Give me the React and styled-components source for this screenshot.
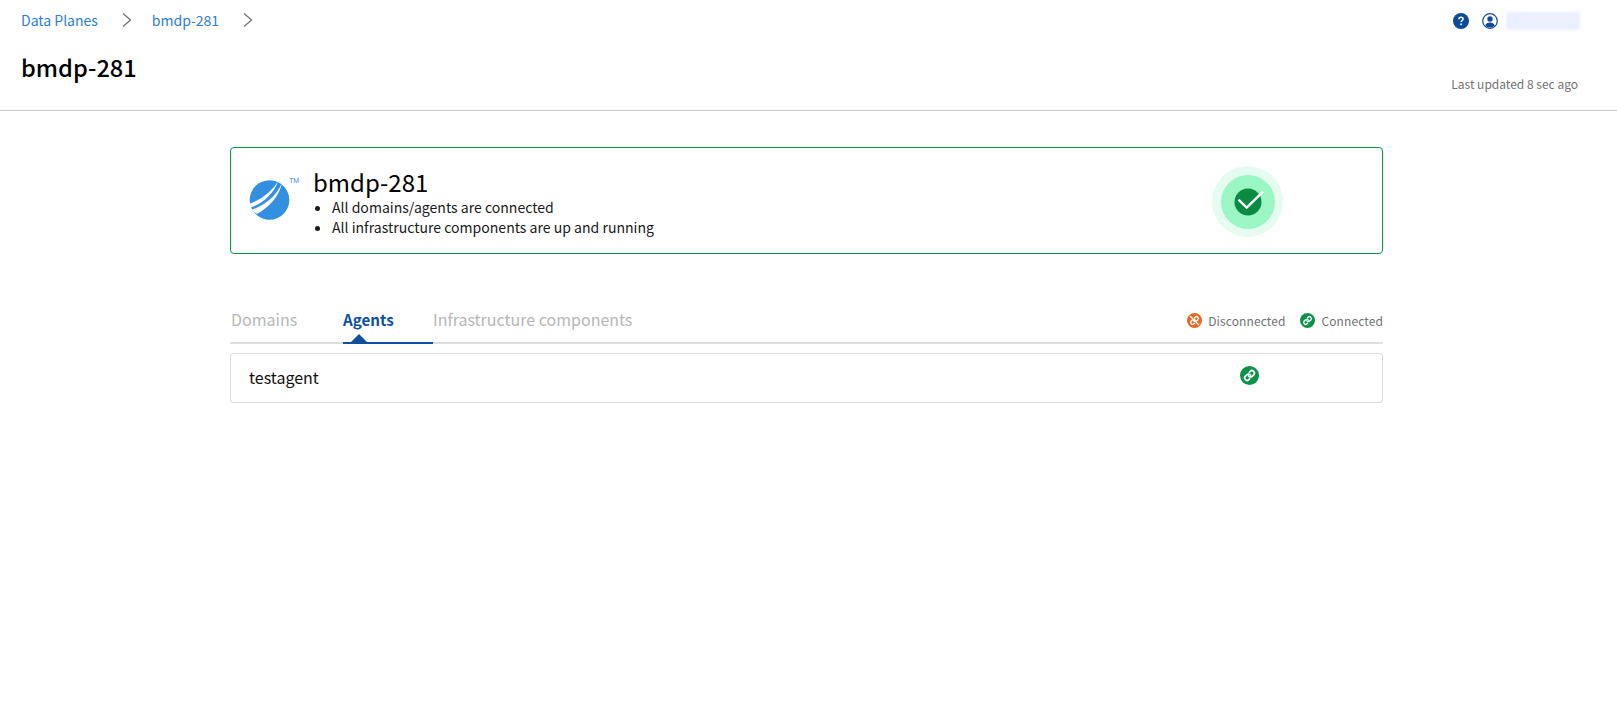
import React from "react";
import styled, { createGlobalStyle } from "styled-components";

const Global = createGlobalStyle`
  html, body { margin: 0; padding: 0; background: #fff; }
  body { font-family: "Noto Sans CJK SC", "Source Sans Pro", "Noto Sans", sans-serif; color: #000; }
`;

const Page = styled.div`
  width: 1617px;
  height: 723px;
  overflow: hidden;
  display: flex;
  flex-direction: column;
`;

const Header = styled.header`
  height: 111px;
  box-sizing: border-box;
  border-bottom: 1px solid #c6c6c6;
  padding: 0 37px 0 21px;
  display: grid;
  grid-template-columns: 1fr auto;
  grid-template-rows: 41px 1fr;
`;

const Breadcrumbs = styled.nav`
  display: flex;
  align-items: center;
  padding-bottom: 2px;
  font-size: 14px;
  color: #2a7fd5;
`;

const Crumb = styled.span`
  line-height: 20px;
`;

const CrumbSep = styled.svg`
  width: 10px;
  height: 16px;
  margin: 0 20px 0 24px;
  fill: none;
  stroke: #727272;
  stroke-width: 1.3;
`;

const UserBar = styled.div`
  display: flex;
  align-items: center;
  justify-content: flex-end;
  gap: 13px;
`;

const BlurName = styled.div`
  width: 74px;
  height: 18px;
  margin-left: -5px;
  background: #ebefff;
  filter: blur(1.5px);
`;

const Title = styled.h1`
  margin: 0;
  font-size: 23.6px;
  line-height: 36px;
  font-weight: 500;
  align-self: start;
  margin-top: 8px;
`;

const Updated = styled.div`
  font-size: 12px;
  line-height: 18px;
  color: #727272;
  align-self: end;
  justify-self: end;
  margin: 0 2px 17px 0;
`;

const Content = styled.main`
  width: 1153px;
  margin-left: 230px;
  padding-top: 36px;
`;

const SummaryCard = styled.section`
  height: 107px;
  box-sizing: border-box;
  border: 1px solid #0a9249;
  border-radius: 4px;
  display: flex;
  align-items: center;
  position: relative;
  padding-left: 17px;
`;

const LogoWrap = styled.div`
  width: 54px;
  height: 50px;
  margin-right: 11px;
  flex: none;
`;

const SummaryText = styled.div`
  display: flex;
  flex-direction: column;
  margin-top: 2px;
`;

const SummaryName = styled.div`
  font-size: 24px;
  line-height: 30px;
  font-weight: 400;
`;

const Bullets = styled.ul`
  margin: 0;
  padding: 0 0 0 19px;
  font-size: 14.05px;
  line-height: 20px;
  color: #1a1a1a;
`;

const StatusHalo = styled.div`
  position: absolute;
  left: 981px;
  top: 18px;
  width: 71px;
  height: 71px;
  border-radius: 50%;
  background: #e6fcf0;
  display: flex;
  align-items: center;
  justify-content: center;
`;

const StatusRing = styled.div`
  width: 54px;
  height: 54px;
  border-radius: 50%;
  background: #9af7c4;
  display: flex;
  align-items: center;
  justify-content: center;
`;

const TabsBar = styled.div`
  margin-top: 52px;
  height: 38px;
  box-sizing: border-box;
  border-bottom: 2px solid #dedede;
  display: flex;
  justify-content: space-between;
`;

const TabList = styled.div`
  display: flex;
`;

const Tab = styled.div`
  position: relative;
  box-sizing: border-box;
  height: 38px;
  width: ${p => p.$width}px;
  padding-top: 1px;
  padding-left: ${p => p.$inset || 0}px;
  font-size: ${p => (p.$active ? 15.2 : 16)}px;
  line-height: 24px;
  white-space: nowrap;
  font-weight: ${p => (p.$active ? 700 : 400)};
  color: ${p => (p.$active ? "#0e4f9e" : "#b6b6b6")};
  border-bottom: 2px solid ${p => (p.$active ? "#0e4f9e" : "transparent")};
  &::after {
    content: "";
    display: ${p => (p.$active ? "block" : "none")};
    position: absolute;
    left: 8px;
    bottom: 0;
    border-left: 8px solid transparent;
    border-right: 8px solid transparent;
    border-bottom: 8px solid #0e4f9e;
  }
`;

const Legend = styled.div`
  display: flex;
  align-items: center;
  height: 29px;
  font-size: 12px;
  letter-spacing: 0.1px;
  color: #727272;
`;

const LegendItem = styled.div`
  display: flex;
  align-items: center;
  gap: 6px;
  margin-left: 15px;
`;

const Row = styled.div`
  margin-top: 9px;
  height: 50px;
  box-sizing: border-box;
  border: 1px solid #dcdcdc;
  border-radius: 3px;
  display: flex;
  align-items: center;
  padding: 0 0 2px 18px;
  position: relative;
  font-size: 16px;
  color: #111;
`;

const RowStatus = styled.div`
  position: absolute;
  left: 1009px;
  top: 12px;
  display: flex;
`;

const Icon = styled.svg`
  display: block;
  flex: none;
`;

const CheckIcon = styled(Icon)`
  margin-left: 2px;
`;

const Chevron = () => (
  <CrumbSep viewBox="0 0 10 16"><path d="M1 1.5 L8.5 8 L1 14.5" /></CrumbSep>
);

const Help = () => (
  <Icon width="16" height="16" viewBox="0 0 16 16">
    <circle cx="8" cy="8" r="8" fill="#0e4a9a" />
    <path d="M5.9 6.2c0-1.2.9-1.9 2.1-1.9s2.1.7 2.1 1.8c0 1.5-2 1.4-2 2.9" fill="none" stroke="#fff" strokeWidth="1.5" />
    <circle cx="8.05" cy="11.3" r="0.95" fill="#fff" />
  </Icon>
);

const User = () => (
  <Icon width="16" height="16" viewBox="0 0 16 16">
    <circle cx="8" cy="8" r="7.3" fill="#fff" stroke="#0e4a9a" strokeWidth="1.2" />
    <circle cx="8" cy="6" r="2.7" fill="#0e4a9a" />
    <path d="M3.2 12.4c.6-2 2.6-3 4.8-3s4.200 1 4.800 3c-1.300 1.300-2.900 2-4.800 2s-3.500-.7-4.800-2z" fill="#0e4a9a" />
  </Icon>
);

const Logo = () => (
  <svg width="54" height="50" viewBox="0 0 54 50">
    <circle cx="21.500" cy="24" r="19.800" fill="#338fdf" />
    <path d="M30 5.500 C 24 15, 13 24, 0 28.500 L 1 32 C 15 28, 26 17, 30 5.500 Z" fill="#fff" />
    <path d="M34 7 C 29 19, 18 29, 3 34 L 9 38 C 20 32, 31 21, 34 7 Z" fill="#fff" />
    <text x="41" y="7" fontSize="7" fill="#338fdf" fontFamily="Liberation Sans, sans-serif">TM</text>
  </svg>
);

const Check = () => (
  <CheckIcon width="38" height="34" viewBox="0 0 38 34">
    <circle cx="18" cy="17" r="13.500" fill="#0a8a42" />
    <path d="M8.500 14.700 L16.700 22.500 L33.300 6.300" fill="none" stroke="#fff" strokeWidth="2.400" />
  </CheckIcon>
);

const LinkIcon = ({ size = 16, bg = "#0a9249", broken }) => (
  <Icon width={size} height={size} viewBox="0 0 16 16">
    <circle cx="8" cy="8" r="8" fill={bg} />
    <g transform="translate(3.100 3.100) scale(0.41)" fill="none" stroke="#fff" strokeWidth="3.600" strokeLinecap="round" strokeLinejoin="round">
      <path d="M10 13a5 5 0 0 0 7.540.54l3-3a5 5 0 0 0-7.070-7.070l-1.720 1.710" />
      <path d="M14 11a5 5 0 0 0-7.540-.54l-3 3a5 5 0 0 0 7.070 7.070l1.710-1.710" />
    </g>
    {broken && <path d="M3.500 3.500 L12.500 12.500" stroke="#fff" strokeWidth="1.300" strokeLinecap="round" />}
  </Icon>
);

export default function App() {
  return (
    <Page>
      <Global />
      <Header>
        <Breadcrumbs>
          <Crumb>Data Planes</Crumb>
          <Chevron />
          <Crumb>bmdp-281</Crumb>
          <Chevron />
        </Breadcrumbs>
        <UserBar>
          <Help />
          <User />
          <BlurName />
        </UserBar>
        <Title>bmdp-281</Title>
        <Updated>Last updated 8 sec ago</Updated>
      </Header>
      <Content>
        <SummaryCard>
          <LogoWrap><Logo /></LogoWrap>
          <SummaryText>
            <SummaryName>bmdp-281</SummaryName>
            <Bullets>
              <li>All domains/agents are connected</li>
              <li>All infrastructure components are up and running</li>
            </Bullets>
          </SummaryText>
          <StatusHalo>
            <StatusRing><Check /></StatusRing>
          </StatusHalo>
        </SummaryCard>
        <TabsBar>
          <TabList>
            <Tab $width={113} $inset={1}>Domains</Tab>
            <Tab $width={90} $active>Agents</Tab>
            <Tab $width={210}>Infrastructure components</Tab>
          </TabList>
          <Legend>
            <LegendItem><LinkIcon size={15} bg="#f0641e" broken />Disconnected</LegendItem>
            <LegendItem><LinkIcon size={15} />Connected</LegendItem>
          </Legend>
        </TabsBar>
        <Row>
          testagent
          <RowStatus><LinkIcon size={19} /></RowStatus>
        </Row>
      </Content>
    </Page>
  );
}
